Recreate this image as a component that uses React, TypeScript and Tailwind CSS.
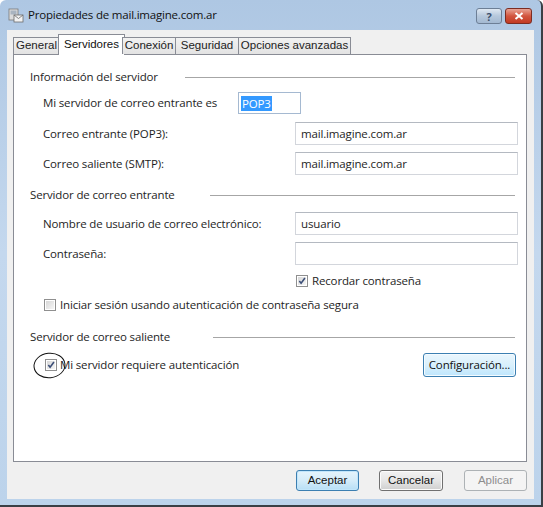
import React from 'react';

const ui = "font-['Open_Sans','Noto_Sans',sans-serif]";
const narrow = "font-['Liberation_Sans',Arial,sans-serif]";
const txt = 'text-[11.5px] tracking-[-0.15px] text-[#1e1e1e]';

const Check: React.FC<{ checked?: boolean }> = ({ checked = false }) => (
  <span className="flex h-[12px] w-[12px] shrink-0 items-center justify-center border border-[#8f8f8f] bg-white">
    <span className="flex h-[8px] w-[8px] items-center justify-center bg-gradient-to-br from-[#d7d7d7] to-[#f6f6f6]">
      {checked && (
        <svg viewBox="0 0 9 9" className="h-[8px] w-[8px]">
          <path d="M1.5 4.5 L3.5 7 L7.8 1.2" fill="none" stroke="#3b4e77" strokeWidth="1.8" />
        </svg>
      )}
    </span>
  </span>
);

const Field: React.FC<{ value?: string }> = ({ value = '' }) => (
  <div className={`flex h-[23px] w-[223px] items-center border border-[#d3d6dc] border-t-[#b4b9c1] bg-white px-[5px] ${txt}`}>
    {value}
  </div>
);

const Heading: React.FC<{ label: string; lead: number }> = ({ label, lead }) => (
  <div className="flex h-[16px] items-center pl-[16px] pr-[11px]">
    <span className={`shrink-0 ${txt}`} style={{ width: lead }}>
      {label}
    </span>
    <span className="h-px flex-1 bg-[#a6a6a6]" />
  </div>
);

const Row: React.FC<{ label: string; children: React.ReactNode; className?: string }> = ({ label, children, className = '' }) => (
  <div className={`flex items-center pl-[29px] ${className}`}>
    <span className={`w-[252px] shrink-0 ${txt}`}>{label}</span>
    {children}
  </div>
);

const tabs = [
  { label: 'General', w: 46 },
  { label: 'Servidores', w: 63, active: true },
  { label: 'Conexión', w: 53 },
  { label: 'Seguridad', w: 63 },
  { label: 'Opciones avanzadas', w: 112 },
];

export default function App() {
  return (
    <div className={`relative flex h-[507px] w-[543px] flex-col overflow-hidden rounded-t-[6px] border-b-[2px] border-r-[2px] border-[#3a3f45] bg-gradient-to-b from-[#aec7e3] via-[#c4d8ee] to-[#bcd3eb] ${ui}`}>
      {/* title bar */}
      <div className="flex h-[30px] shrink-0 items-center pl-[8px] pr-[9px]">
        <svg viewBox="0 0 16 16" className="h-[16px] w-[16px]">
          <rect x="1" y="2" width="9" height="11" fill="#dcdcdc" stroke="#7a7a7a" strokeWidth="0.8" />
          <rect x="2.5" y="3.5" width="6" height="4" fill="#a9b4c0" />
          <rect x="6" y="8" width="9" height="7" fill="#f2f2f2" stroke="#6c6c6c" strokeWidth="0.8" />
          <path d="M6 8 L10.5 11.5 L15 8" fill="none" stroke="#6c6c6c" strokeWidth="0.8" />
        </svg>
        <span className="ml-[4px] text-[11.5px] tracking-[-0.2px] text-[#111]">Propiedades de mail.imagine.com.ar</span>
        <div className="ml-auto flex items-center gap-[3px] pt-[2px]">
          <div className="flex h-[16px] w-[26px] items-center justify-center rounded-[3px] border border-[#6d7f96] bg-gradient-to-b from-[#dfe8f2] via-[#b6c8dc] to-[#a3b9d2] text-[11px] font-bold leading-none text-[#3b4f6b]">
            ?
          </div>
          <div className="flex h-[16px] w-[27px] items-center justify-center rounded-[3px] border border-[#7c2d22] bg-gradient-to-b from-[#e7a395] via-[#d2553f] to-[#c23a22]">
            <svg viewBox="0 0 10 8" className="h-[8px] w-[10px]">
              <path d="M1.5 1 L8.5 7 M8.5 1 L1.5 7" stroke="#fff" strokeWidth="2" />
            </svg>
          </div>
        </div>
      </div>

      <div className="flex min-h-0 flex-1 pl-[7px] pr-[7px] pb-[6px]">
        {/* client area */}
        <div className="flex flex-1 flex-col bg-[#f0f0f0] pl-[6px] pr-[7px] pt-[4px]">
          {/* tab strip */}
          <div className={`relative z-10 flex h-[20px] items-end pl-[1px] text-[11.5px] ${narrow}`}>
            {tabs.map((t) =>
              t.active ? (
                <div
                  key={t.label}
                  className="-mx-[2px] -mb-px flex h-[21px] items-start justify-center border border-b-0 border-[#898c95] bg-white pt-[1px] text-[#111]"
                  style={{ width: t.w + 4 }}
                >
                  {t.label}
                </div>
              ) : (
                <div
                  key={t.label}
                  className="-ml-px flex h-[17px] items-center justify-center border border-b-0 border-[#898c95] bg-gradient-to-b from-[#f2f2f2] to-[#e3e3e3] text-[#222]"
                  style={{ width: t.w + 1 }}
                >
                  {t.label}
                </div>
              )
            )}
          </div>

          {/* tab panel */}
          <div className="flex h-[408px] flex-col border border-[#898c95] bg-white pt-[14px]">
            <Heading label="Información del servidor" lead={155} />

            <Row label="Mi servidor de correo entrante es" className="mt-[7px] h-[22px]">
              <div className="-ml-[57px] flex h-[22px] w-[63px] items-center border border-[#a5b9d1] bg-white pl-[2px]">
                <span className="bg-[#3399ff] px-[1px] text-[11.5px] leading-[15px] tracking-[-0.15px] text-white">POP3</span>
              </div>
            </Row>
            <Row label="Correo entrante (POP3):" className="mt-[8px]">
              <Field value="mail.imagine.com.ar" />
            </Row>
            <Row label="Correo saliente (SMTP):" className="mt-[7px]">
              <Field value="mail.imagine.com.ar" />
            </Row>

            <div className="mt-[12px]">
              <Heading label="Servidor de correo entrante" lead={180} />
            </div>
            <Row label="Nombre de usuario de correo electrónico:" className="mt-[9px]">
              <Field value="usuario" />
            </Row>
            <Row label="Contraseña:" className="mt-[7px]">
              <Field />
            </Row>

            <div className={`mt-[8px] flex h-[16px] items-center gap-[4px] pl-[282px] ${txt}`}>
              <Check checked />
              <span>Recordar contraseña</span>
            </div>
            <div className={`mt-[8px] flex h-[16px] items-center gap-[4px] pl-[30px] ${txt}`}>
              <Check />
              <span>Iniciar sesión usando autenticación de contraseña segura</span>
            </div>

            <div className="mt-[16px]">
              <Heading label="Servidor de correo saliente" lead={183} />
            </div>
            <div className={`relative mt-[8px] flex h-[24px] items-center pl-[31px] pr-[10px] ${txt}`}>
              <Check checked />
              <span className="ml-[3px]">Mi servidor requiere autenticación</span>
              {/* hand-drawn ring around the checkbox */}
              <svg className="pointer-events-none absolute left-[19px] top-[-1px] h-[27px] w-[34px]" viewBox="0 0 34 27">
                <ellipse cx="16.5" cy="13.5" rx="15.5" ry="12.3" fill="none" stroke="#111" strokeWidth="1" transform="rotate(-6 16.5 13.5)" />
              </svg>
              <button className="ml-auto h-[24px] w-[93px] rounded-[3px] border border-[#3c7fb1] bg-gradient-to-b from-[#eaf6fd] via-[#d9f0fc] to-[#bee6fd] text-[#111] shadow-[inset_0_0_0_1px_#f4fbff]">
                Configuración...
              </button>
            </div>
          </div>

          {/* dialog buttons */}
          <div className={`flex flex-1 items-start justify-end pt-[8px] text-[11.5px] ${narrow}`}>
            <button className="h-[21px] w-[63px] rounded-[3px] border border-[#3c7fb1] bg-gradient-to-b from-[#e5f4fc] via-[#d5ecf9] to-[#b7dff6] text-[#111] shadow-[inset_0_0_0_1px_#c2e6fb]">
              Aceptar
            </button>
            <button className="ml-[20px] h-[21px] w-[64px] rounded-[3px] border border-[#707070] bg-gradient-to-b from-[#f2f2f2] via-[#e6e6e6] to-[#cfcfcf] text-[#111] shadow-[inset_0_0_0_1px_#fbfbfb]">
              Cancelar
            </button>
            <button className="ml-[21px] h-[21px] w-[63px] rounded-[3px] border border-[#adb2b5] bg-[#f4f4f4] text-[#8d8d8d]">
              Aplicar
            </button>
          </div>
        </div>
      </div>
    </div>
  );
}
